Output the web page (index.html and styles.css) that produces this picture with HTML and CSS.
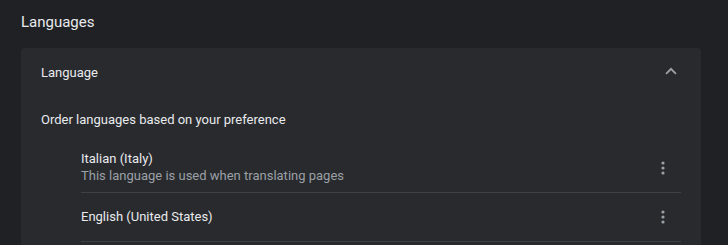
FILE: index.html
```html
<!DOCTYPE html>
<html lang="en">
  <head>
    <meta charset="UTF-8" />
    <title>Languages</title>
    <link rel="stylesheet" href="styles.css">
  </head>
  <body>
    <h2 class="page-title">Languages</h2>
    <div class="card">
      <!-- 折叠标题 -->
      <div class="card-head">
        <span>Language</span>
        <svg class="chevron" width="12" height="8" viewBox="0 0 12 8">
          <path d="M6 0.6L0.4 6.2l1.3 1.3L6 3.2l4.3 4.3 1.3-1.3z" fill="#9aa0a6" />
        </svg>
      </div>
      <div class="hint">Order languages based on your preference</div>
      <div class="lang-list">
        <div class="lang-item">
          <div class="lang-text">
            <div class="lang-name">Italian (Italy)</div>
            <div class="lang-sub">This language is used when translating pages</div>
          </div>
          <svg class="more" width="20" height="20" viewBox="0 0 20 20">
            <circle cx="10" cy="5" r="1.6" />
            <circle cx="10" cy="10" r="1.6" />
            <circle cx="10" cy="15" r="1.6" />
          </svg>
        </div>
        <div class="lang-item">
          <div class="lang-text">
            <div class="lang-name">English (United States)</div>
          </div>
          <svg class="more" width="20" height="20" viewBox="0 0 20 20">
            <circle cx="10" cy="5" r="1.6" />
            <circle cx="10" cy="10" r="1.6" />
            <circle cx="10" cy="15" r="1.6" />
          </svg>
        </div>
      </div>
    </div>
  </body>
</html>
```

FILE: styles.css
```css
body {
  margin: 0;
  padding: 0 21px;
  background-color: #202124;
  color: #e8eaed;
  font-family: Roboto, "Liberation Sans", sans-serif;
  font-size: 13px;
}

.page-title {
  margin: 0;
  height: 48px;
  line-height: 45px;
  font-size: 15px;
  font-weight: 400;
}

.card {
  width: 680px;
  height: 220px;
  background-color: #292a2d;
  border-radius: 4px;
  padding: 0 20px;
  box-sizing: border-box;
}

.card-head {
  display: flex;
  align-items: center;
  justify-content: space-between;
  height: 48px;
}

.chevron {
  display: block;
  margin-right: 4px;
  margin-top: -2px;
}

.hint {
  height: 48px;
  line-height: 48px;
}

.lang-list {
  margin-left: 40px;
}

.lang-item {
  display: flex;
  align-items: center;
  justify-content: space-between;
  height: 48px;
  border-bottom: 1px solid #3f4042;
}

.lang-text {
  margin-top: -2px;
}

.lang-sub {
  margin-top: 2px;
  color: #9aa0a6;
}

.more {
  display: block;
  fill: #9aa0a6;
  margin-right: 8px;
}
```
